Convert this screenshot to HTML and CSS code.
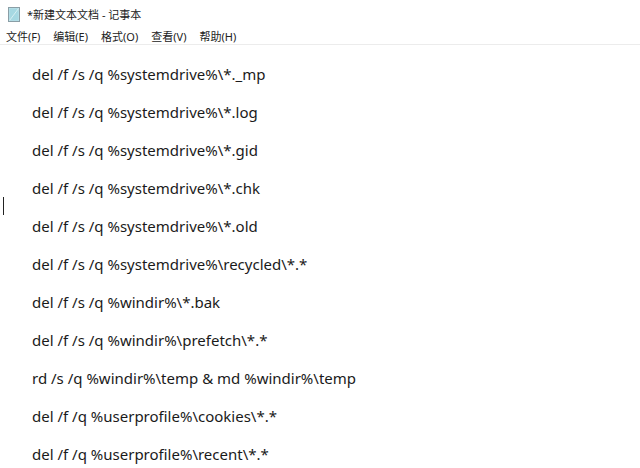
FILE: index.html
```html
<!DOCTYPE html>
<html lang="zh-CN">
  <head>
    <meta charset="UTF-8" />
    <title>*新建文本文档 - 记事本</title>
    <link rel="stylesheet" href="styles.css">
  </head>
  <body>
    <header class="titlebar">
      <svg class="app-icon" width="12" height="15" viewBox="0 0 12 15">
        <rect x="0.5" y="0.5" width="11" height="14" fill="#bfe3ea" stroke="#8a9ea6" />
        <rect x="1.5" y="1.5" width="9" height="12" fill="#a6d8e2" />
        <line x1="1.5" y1="13.5" x2="10.5" y2="1.5" stroke="#d6eef2" />
      </svg>
      <span class="title">*新建文本文档 - 记事本</span>
    </header>

    <nav class="menubar">
      <span>文件(F)</span>
      <span>编辑(E)</span>
      <span>格式(O)</span>
      <span>查看(V)</span>
      <span>帮助(H)</span>
    </nav>

    <main class="editor">
      <span class="caret"></span>
      <p>del /f /s /q %systemdrive%\*._mp</p>
      <p>del /f /s /q %systemdrive%\*.log</p>
      <p>del /f /s /q %systemdrive%\*.gid</p>
      <p>del /f /s /q %systemdrive%\*.chk</p>
      <p>del /f /s /q %systemdrive%\*.old</p>
      <p>del /f /s /q %systemdrive%\recycled\*.*</p>
      <p>del /f /s /q %windir%\*.bak</p>
      <p>del /f /s /q %windir%\prefetch\*.*</p>
      <p>rd /s /q %windir%\temp &amp; md %windir%\temp</p>
      <p>del /f /q %userprofile%\cookies\*.*</p>
      <p>del /f /q %userprofile%\recent\*.*</p>
    </main>
  </body>
</html>
```

FILE: styles.css
```css
body {
  margin: 0;
  background: #fff;
  font-family: "Noto Sans", "Noto Sans CJK SC", sans-serif;
  color: #1a1a1a;
  overflow: hidden;
}

.titlebar {
  height: 28px;
  display: flex;
  align-items: center;
  gap: 7px;
  padding-left: 8px;
  font-size: 11px;
  color: #222;
}

.menubar {
  height: 16px;
  display: flex;
  align-items: center;
  gap: 13px;
  padding: 0 6px 0 6px;
  font-size: 11px;
  color: #222;
  border-bottom: 1px solid #ececec;
}

.editor {
  position: relative;
  padding: 18px 0 0 32px;
}

.editor p {
  margin: 0;
  height: 38px;
  line-height: 22px;
  font-size: 15px;
  white-space: pre;
}

.caret {
  position: absolute;
  left: 3px;
  top: 152px;
  width: 1px;
  height: 18px;
  background: #222;
}
```
